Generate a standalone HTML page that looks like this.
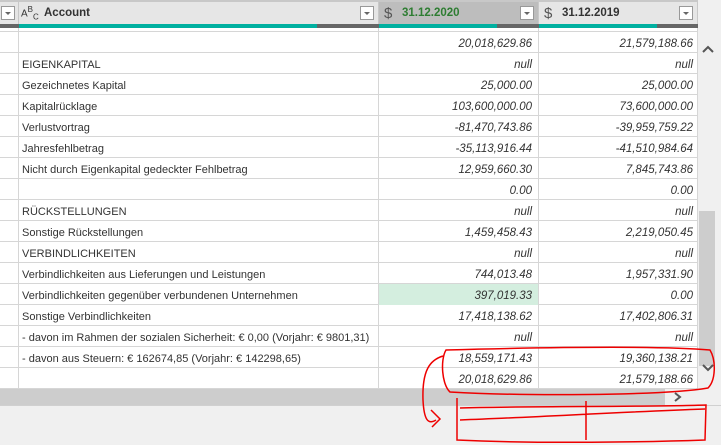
<!DOCTYPE html>
<html><head><meta charset="utf-8"><style>
*{margin:0;padding:0;box-sizing:border-box}
body{width:721px;height:445px;overflow:hidden;background:#f0f0f0;font-family:"Liberation Sans",sans-serif;font-size:11.5px;color:#333;position:relative}
.hdr{position:absolute;top:0;left:0;width:698px;height:28px;background:#e6e6e6;border-top:2px solid #c8c8c8}
.hc{position:absolute;top:0;height:26px;border-right:1px solid #c8c8c8}
.bar{position:absolute;bottom:0;height:4px;background:#666}
.bar i{position:absolute;left:0;top:0;height:4px;background:#00b0a0}
.dd{position:absolute;top:4px;width:14px;height:14px;border:1px solid #999;background:#fff}
.dd:after{content:"";position:absolute;left:3px;top:5px;border-left:3px solid transparent;border-right:3px solid transparent;border-top:3px solid #666}
.t{position:absolute;top:5px;font-weight:bold;font-size:11.5px}
.grid{position:absolute;top:28px;left:0;width:698px;height:361px;background:#fff}
.row{position:absolute;left:0;width:698px;height:21px;border-bottom:1px solid #d6d6d6}
.c{position:absolute;top:0;height:21px;line-height:20px;padding-top:2px;border-right:1px solid #d6d6d6;white-space:nowrap}
.c0{left:0;width:19px}
.c1{left:19px;width:360px;padding-left:3px;font-size:11px}
.c2{left:379px;width:160px;text-align:right;padding-right:6px;font-style:italic}
.c3{left:539px;width:159px;text-align:right;padding-right:4px;font-style:italic}
</style></head><body>
<div class="hdr">
 <div class="hc" style="left:0;width:19px"><div class="dd" style="left:1px"></div><div class="bar" style="left:0;width:19px"></div></div>
 <div class="hc" style="left:19px;width:360px"><span class="t" style="left:2px;font-weight:normal;font-size:10px;top:3px">A<sup style="font-size:8px">B</sup><sub style="font-size:8px">C</sub></span><span class="t" style="left:25px">Account</span><div class="dd" style="left:341px"></div><div class="bar" style="left:0;width:360px"><i style="width:298px"></i></div></div>
 <div class="hc" style="left:379px;width:160px;background:#bdbdbd"><span class="t" style="left:5px;font-weight:normal;font-size:15px;top:3px;color:#555">$</span><span class="t" style="left:23px;color:#2e7d32">31.12.2020</span><div class="dd" style="left:141px"></div><div class="bar" style="left:0;width:160px"><i style="width:118px"></i></div></div>
 <div class="hc" style="left:539px;width:159px"><span class="t" style="left:5px;font-weight:normal;font-size:15px;top:3px;color:#555">$</span><span class="t" style="left:23px">31.12.2019</span><div class="dd" style="left:140px"></div><div class="bar" style="left:0;width:159px"><i style="width:118px"></i></div></div>
</div>
<div class="grid" id="g"></div>
<div style="position:absolute;left:698px;top:28px;width:23px;height:361px;background:#f0f0f0"></div>
<div style="position:absolute;left:699px;top:211px;width:16px;height:155px;background:#cdcdcd"></div>
<svg style="position:absolute;left:700px;top:40px" width="16" height="340"><g fill="none" stroke="#555" stroke-width="2"><path d="M3 12 L8 7 L13 12"/><path d="M3 325 L8 330 L13 325"/></g></svg>
<div style="position:absolute;left:0;top:389px;width:698px;height:16px;background:#cdcdcd"></div>
<div style="position:absolute;left:665px;top:389px;width:56px;height:16px;background:#f0f0f0"></div>
<svg style="position:absolute;left:670px;top:390px" width="16" height="14"><path d="M5 3 L10 7 L5 11" fill="none" stroke="#555" stroke-width="2"/></svg>
<div style="position:absolute;left:0;top:405px;width:721px;height:1px;background:#d0d0d0"></div>
<svg style="position:absolute;left:0;top:0" width="721" height="445"><g fill="none" stroke="#e00" stroke-width="1.5">
<path d="M446 350 C520 348 650 345 710 350 C716 360 716 380 708 388 C660 396 520 396 450 392 C442 385 440 360 446 350Z"/>
<path d="M443 356 C430 360 422 370 423 400 C424 420 428 425 436 420 M431 410 L440 419 L432 427"/>
<path d="M457 398 L457 440 C540 444 650 442 705 440 L706 405 C650 407 520 406 460 408"/>
<path d="M460 420 C540 417 620 412 705 409 M586 401 L586 440"/>
</g></svg>
<script>
var d=[["","20,018,629.86","21,579,188.66"],["EIGENKAPITAL","null","null"],["Gezeichnetes Kapital","25,000.00","25,000.00"],["Kapitalrücklage","103,600,000.00","73,600,000.00"],["Verlustvortrag","-81,470,743.86","-39,959,759.22"],["Jahresfehlbetrag","-35,113,916.44","-41,510,984.64"],["Nicht durch Eigenkapital gedeckter Fehlbetrag","12,959,660.30","7,845,743.86"],["","0.00","0.00"],["RÜCKSTELLUNGEN","null","null"],["Sonstige Rückstellungen","1,459,458.43","2,219,050.45"],["VERBINDLICHKEITEN","null","null"],["Verbindlichkeiten aus Lieferungen und Leistungen","744,013.48","1,957,331.90"],["Verbindlichkeiten gegenüber verbundenen Unternehmen","397,019.33","0.00"],["Sonstige Verbindlichkeiten","17,418,138.62","17,402,806.31"],["- davon im Rahmen der sozialen Sicherheit: € 0,00 (Vorjahr: € 9801,31)","null","null"],["- davon aus Steuern: € 162674,85 (Vorjahr: € 142298,65)","18,559,171.43","19,360,138.21"],["","20,018,629.86","21,579,188.66"]];
var h='<div class="row" style="top:0;height:4px"><div class="c c0" style="height:4px"></div><div class="c c1" style="height:4px"></div><div class="c c2" style="height:4px"></div><div class="c c3" style="height:4px"></div></div>';
d.forEach(function(r,i){h+='<div class="row" style="top:'+(4+i*21)+'px"><div class="c c0"></div><div class="c c1">'+r[0]+'</div><div class="c c2"'+(i==12?' style="background:#d4eedf"':'')+'>'+r[1]+'</div><div class="c c3">'+r[2]+'</div></div>';});
document.getElementById('g').innerHTML=h;
</script>
</body></html>
